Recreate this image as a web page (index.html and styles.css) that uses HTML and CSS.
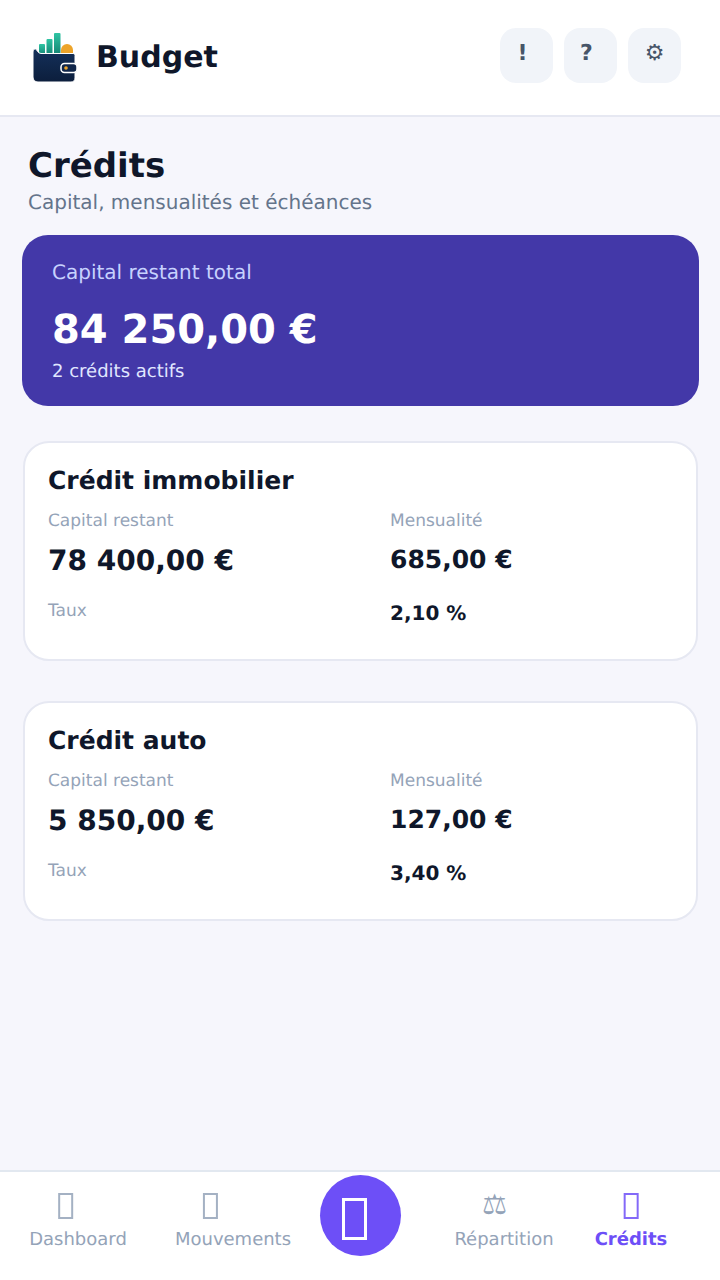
FILE: index.html
```html
<!DOCTYPE html>
<html lang="fr">
<head>
  <meta charset="UTF-8">
  <meta name="viewport" content="width=device-width, initial-scale=1.0">
  <title>Budget - Crédits</title>
  <link rel="stylesheet" href="styles.css">
</head>
<body>

  <!-- Header -->
  <div class="header">
    <div class="brand">
      <svg class="logo" width="48" height="54" viewBox="0 0 48 54">
        <defs>
          <linearGradient id="bar" x1="0" y1="0" x2="0" y2="1">
            <stop offset="0" stop-color="#2fc4a3"/>
            <stop offset="1" stop-color="#128070"/>
          </linearGradient>
          <linearGradient id="wallet" x1="0" y1="0" x2="0" y2="1">
            <stop offset="0" stop-color="#14305a"/>
            <stop offset="1" stop-color="#0c1e3c"/>
          </linearGradient>
        </defs>
        <rect x="9" y="13" width="6" height="12" rx="1" fill="url(#bar)"/>
        <rect x="16.500" y="8" width="6" height="17" rx="1" fill="url(#bar)"/>
        <rect x="24" y="2" width="6.500" height="23" rx="1" fill="url(#bar)"/>
        <path d="M31 24v-5a6 6 0 0 1 12 0v5z" fill="#eda42a"/>
        <path d="M3 21c0-2 1-3 2.500-3 1.500 0 2 4.500 5.500 4.500h32c1.500 0 2 1 2 2V47c0 2.500-1.500 4-4 4H8c-3 0-5-2-5-5z" fill="url(#wallet)" stroke="#fff" stroke-width="1"/>
        <rect x="31" y="32.500" width="16" height="9" rx="3.500" fill="#10264a" stroke="#fff" stroke-width="1.500"/>
        <circle cx="36" cy="37" r="1.800" fill="#eda42a"/>
      </svg>
      <span class="brand-name">Budget</span>
    </div>
    <div class="actions">
      <div class="action">!</div>
      <div class="action">?</div>
      <div class="action action-gear">⚙</div>
    </div>
  </div>

  <!-- Main content -->
  <div class="content">
    <h1>Crédits</h1>
    <p class="subtitle">Capital, mensualités et échéances</p>

    <section class="total">
      <p class="total-label">Capital restant total</p>
      <p class="total-value">84 250,00 €</p>
      <p class="total-note">2 crédits actifs</p>
    </section>

    <section class="credit">
      <h2>Crédit immobilier</h2>
      <div class="credit-grid">
        <div>
          <p class="field-label">Capital restant</p>
          <p class="field-big">78 400,00 €</p>
        </div>
        <div>
          <p class="field-label">Mensualité</p>
          <p class="field-mid">685,00 €</p>
        </div>
        <div><p class="field-label">Taux</p></div>
        <div><p class="field-small">2,10 %</p></div>
      </div>
    </section>

    <section class="credit">
      <h2>Crédit auto</h2>
      <div class="credit-grid">
        <div>
          <p class="field-label">Capital restant</p>
          <p class="field-big">5 850,00 €</p>
        </div>
        <div>
          <p class="field-label">Mensualité</p>
          <p class="field-mid">127,00 €</p>
        </div>
        <div><p class="field-label">Taux</p></div>
        <div><p class="field-small">3,40 %</p></div>
      </div>
    </section>
  </div>

  <!-- Bottom nav -->
  <div class="nav">
    <div class="nav-item nav-dashboard"><span class="nav-box"></span><span>Dashboard</span></div>
    <div class="nav-item nav-moves"><span class="nav-box"></span><span>Mouvements</span></div>
    <div class="nav-add"><span class="add-box"></span></div>
    <div class="nav-item nav-split"><span class="nav-icon">⚖</span><span>Répartition</span></div>
    <div class="nav-item nav-active"><span class="nav-box"></span><span>Crédits</span></div>
  </div>

</body>
</html>
```

FILE: styles.css
```css
* { box-sizing: border-box; }
html, body { height: 100%; }
body { font-family: "DejaVu Sans", sans-serif; margin: 0; background-color: #f6f6fc; color: #0f172a; text-rendering: geometricPrecision; }
p, h1, h2 { margin: 0; }

.header { height: 117px; background-color: #fff; border-bottom: 2px solid #e6e8f2; display: flex; align-items: center; justify-content: space-between; padding: 0 39px 0 30px; }
.brand { display: flex; align-items: center; gap: 18px; }
.logo { display: block; }
.brand-name { font-size: 30px; font-weight: 700; }
.actions { display: flex; gap: 11px; margin-bottom: 4px; }
.action { width: 53px; height: 55px; border-radius: 16px; background-color: #f1f4f9; color: #475569; font-size: 22px; font-weight: 700; display: flex; align-items: center; justify-content: center; padding: 0 8px 4px 0; }
.action-gear { font-weight: 400; padding-right: 0; }

.content { padding: 30px 21px 0 22px; }
h1 { font-size: 34px; line-height: 38px; padding-left: 6px; }
.subtitle { font-size: 20px; line-height: 26px; color: #64748b; padding-left: 6px; margin-top: 4px; }

.total { height: 171px; margin-top: 20px; padding: 24px 30px; border-radius: 26px; background-color: #4338a8; color: #fff; }
.total-label { font-size: 20px; line-height: 27px; color: #c7d2fe; }
.total-value { font-size: 40px; font-weight: 700; line-height: 46px; margin-top: 21px; }
.total-note { font-size: 18px; line-height: 22px; color: #e0e7ff; margin-top: 8px; }

.credit { height: 220px; margin: 35px 1px 0; padding: 23px 23px; background-color: #fff; border: 2px solid #e6e8f2; border-radius: 26px; }
.credit + .credit { margin-top: 40px; }
h2 { font-size: 25px; line-height: 30px; }
.credit-grid { display: grid; grid-template-columns: 342px 1fr; margin-top: 14px; }
.field-label { font-size: 17px; line-height: 22px; color: #94a3b8; }
.field-big { font-size: 28px; font-weight: 700; line-height: 32px; margin-top: 13px; height: 55px; }
.field-mid { font-size: 25px; font-weight: 700; line-height: 32px; margin-top: 12px; }
.field-small { font-size: 20px; font-weight: 700; line-height: 26px; }

.nav { position: fixed; left: 0; right: 0; bottom: 0; height: 110px; background-color: #fff; border-top: 2px solid #e2e8f0; }
.nav-item { position: absolute; top: 17px; display: flex; flex-direction: column; align-items: center; font-size: 18px; color: #94a3b8; transform: translateX(-50%); white-space: nowrap; }
.nav-box { width: 15px; height: 26px; border: 2px solid currentColor; margin: 4px 0 10px; opacity: 0.85; }
.nav-icon { font-size: 28px; line-height: 32px; height: 40px; margin-right: 19px; }
.nav-dashboard { left: 78px; }
.nav-dashboard .nav-box { margin-right: 25px; }
.nav-moves { left: 233px; }
.nav-moves .nav-box { margin-right: 45px; }
.nav-split { left: 504px; }
.nav-active { left: 631px; color: #6d4ff7; font-weight: 700; }
.nav-add { position: absolute; left: 320px; top: 3px; width: 81px; height: 81px; border-radius: 50%; background-color: #6d4ff7; display: flex; align-items: center; justify-content: center; }
.add-box { width: 25px; height: 42px; border: 3px solid #fff; margin: 6px 12px 0 0; }
```
